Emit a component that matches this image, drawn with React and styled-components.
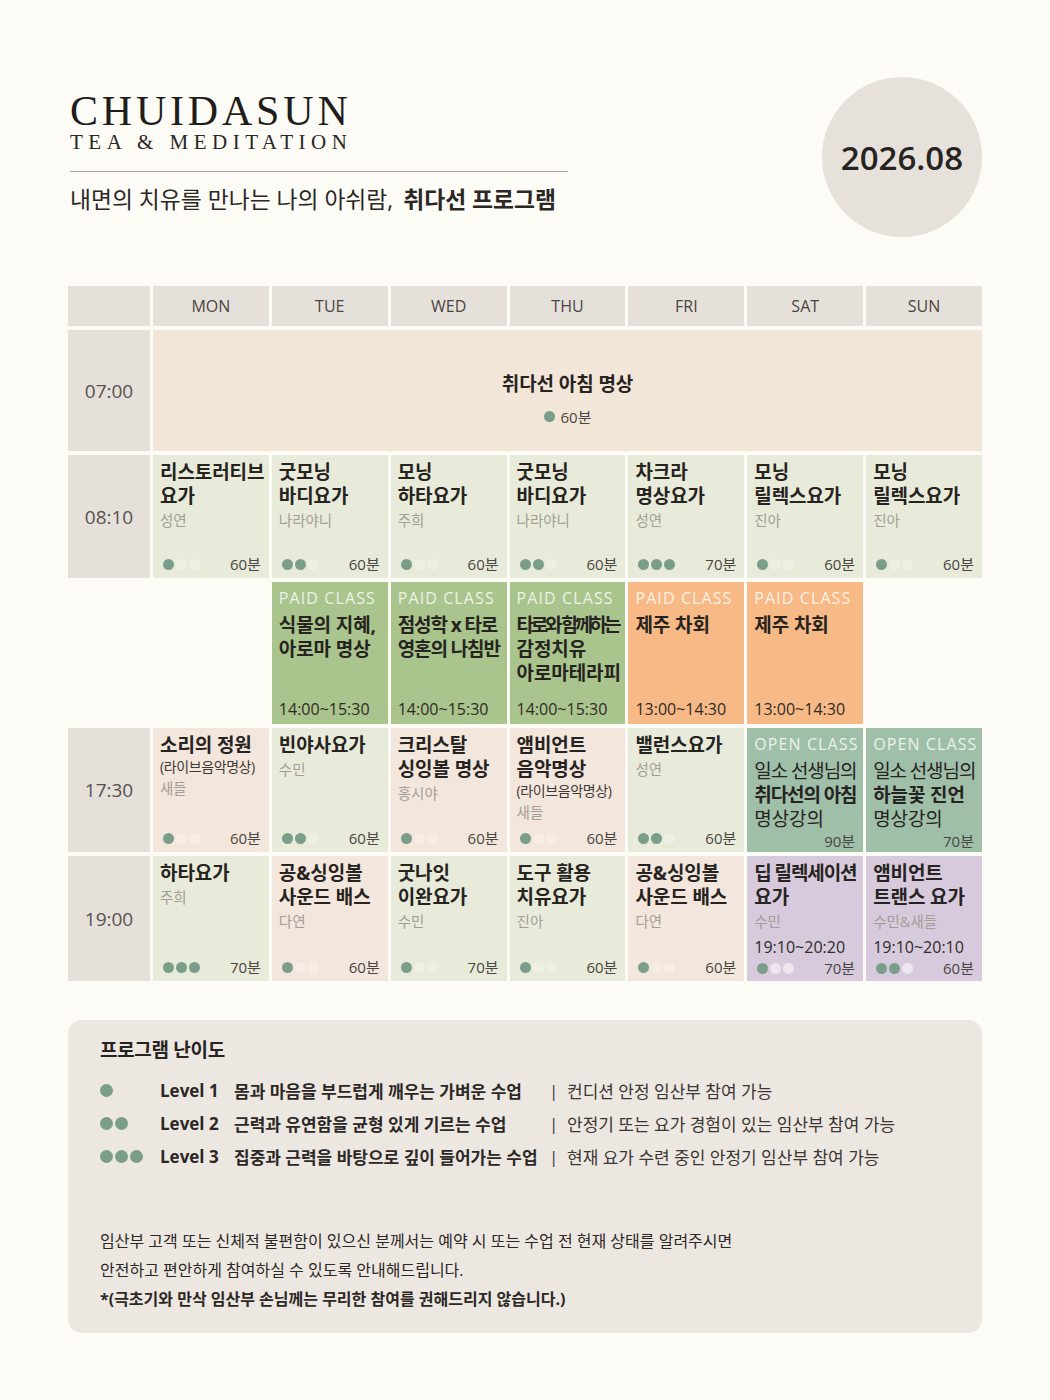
import React from 'react'
import styled, { createGlobalStyle } from 'styled-components'

const GlobalStyle = createGlobalStyle`
  body {
    margin: 0;
    background: #fcfbf5;
    font-family: 'Open Sans', 'Noto Sans CJK KR', sans-serif;
    color: #262320;
  }
`

const tones = {
  head: { bg: '#e6e0da' },
  morning: { bg: '#f2e6d9' },
  green: { bg: '#e8ebda', faint: 'rgba(255,255,255,0.28)' },
  peach: { bg: '#f3e6dc', faint: 'rgba(255,255,255,0.28)' },
  paid: { bg: '#a9c48c' },
  orange: { bg: '#f7b985' },
  teal: { bg: '#9fbfa9' },
  purple: { bg: '#d6cadc', faint: '#eee6ef' },
}

const days = ['MON', 'TUE', 'WED', 'THU', 'FRI', 'SAT', 'SUN']

const rows = [
  {
    time: '08:10',
    cells: [
      { tone: 'green', title: ['리스토러티브', '요가'], teacher: '성연', level: 1, dur: '60분' },
      { tone: 'green', title: ['굿모닝', '바디요가'], teacher: '나라야니', level: 2, dur: '60분' },
      { tone: 'green', title: ['모닝', '하타요가'], teacher: '주희', level: 1, dur: '60분' },
      { tone: 'green', title: ['굿모닝', '바디요가'], teacher: '나라야니', level: 2, dur: '60분' },
      { tone: 'green', title: ['차크라', '명상요가'], teacher: '성연', level: 3, dur: '70분' },
      { tone: 'green', title: ['모닝', '릴렉스요가'], teacher: '진아', level: 1, dur: '60분' },
      { tone: 'green', title: ['모닝', '릴렉스요가'], teacher: '진아', level: 1, dur: '60분' },
    ],
  },
  {
    time: null,
    cells: [
      null,
      { tone: 'paid', label: 'PAID CLASS', title: ['식물의 지혜,', '아로마 명상'], slot: '14:00~15:30' },
      { tone: 'paid', label: 'PAID CLASS', title: [{ t: '점성학 x 타로', fit: true }, { t: '영혼의 나침반', fit: true }], slot: '14:00~15:30' },
      { tone: 'paid', label: 'PAID CLASS', title: [{ t: '타로와 함께하는', tight: true }, '감정치유', '아로마테라피'], slot: '14:00~15:30' },
      { tone: 'orange', label: 'PAID CLASS', title: ['제주 차회'], slot: '13:00~14:30' },
      { tone: 'orange', label: 'PAID CLASS', title: ['제주 차회'], slot: '13:00~14:30' },
      null,
    ],
  },
  {
    time: '17:30',
    cells: [
      { tone: 'peach', title: ['소리의 정원'], sub: '(라이브음악명상)', teacher: '새들', level: 1, dur: '60분' },
      { tone: 'green', title: ['빈야사요가'], teacher: '수민', level: 2, dur: '60분' },
      { tone: 'peach', title: ['크리스탈', '싱잉볼 명상'], teacher: '홍시야', level: 1, dur: '60분' },
      { tone: 'peach', title: ['앰비언트', '음악명상'], sub: '(라이브음악명상)', teacher: '새들', level: 1, dur: '60분' },
      { tone: 'green', title: ['밸런스요가'], teacher: '성연', level: 2, dur: '60분' },
      { tone: 'teal', label: 'OPEN CLASS', title: [{ t: '일소 선생님의', light: true, fit: true }, { t: '취다선의 아침', fit: true }, { t: '명상강의', light: true }], dur: '90분' },
      { tone: 'teal', label: 'OPEN CLASS', title: [{ t: '일소 선생님의', light: true, fit: true }, '하늘꽃 진언', { t: '명상강의', light: true }], dur: '70분' },
    ],
  },
  {
    time: '19:00',
    cells: [
      { tone: 'green', title: ['하타요가'], teacher: '주희', level: 3, dur: '70분' },
      { tone: 'peach', title: ['공&싱잉볼', '사운드 배스'], teacher: '다연', level: 1, dur: '60분' },
      { tone: 'green', title: ['굿나잇', '이완요가'], teacher: '수민', level: 1, dur: '70분' },
      { tone: 'green', title: ['도구 활용', '치유요가'], teacher: '진아', level: 1, dur: '60분' },
      { tone: 'peach', title: ['공&싱잉볼', '사운드 배스'], teacher: '다연', level: 1, dur: '60분' },
      { tone: 'purple', title: [{ t: '딥 릴렉세이션', fit: true }, '요가'], teacher: '수민', slot: '19:10~20:20', level: 1, dur: '70분' },
      { tone: 'purple', title: ['앰비언트', '트랜스 요가'], teacher: '수민&새들', slot: '19:10~20:10', level: 2, dur: '60분' },
    ],
  },
]

const levels = [
  { n: 1, name: 'Level 1', desc: '몸과 마음을 부드럽게 깨우는 가벼운 수업', note: '컨디션 안정 임산부 참여 가능' },
  { n: 2, name: 'Level 2', desc: '근력과 유연함을 균형 있게 기르는 수업', note: '안정기 또는 요가 경험이 있는 임산부 참여 가능' },
  { n: 3, name: 'Level 3', desc: '집중과 근력을 바탕으로 깊이 들어가는 수업', note: '현재 요가 수련 중인 안정기 임산부 참여 가능' },
]

const LevelDots = ({ level, faint, size }) => (
  <Dots>
    {[1, 2, 3].map((i) =>
      i <= level || faint ? (
        <Dot key={i} $on={i <= level} $faint={faint} $size={size} />
      ) : null
    )}
  </Dots>
)

const ClassCell = ({ cell }) => {
  const tone = tones[cell.tone]
  return (
    <Cell $bg={tone.bg}>
      {cell.label && <Label>{cell.label}</Label>}
      <Title $spaced={!!cell.label}>
        {cell.title.map((line, i) => {
          const l = typeof line === 'string' ? { t: line } : line
          return (
            <Line key={i} $light={l.light} $tight={l.tight} $fit={l.fit}>
              {l.t}
            </Line>
          )
        })}
      </Title>
      {cell.sub && <Sub>{cell.sub}</Sub>}
      {cell.teacher && <Teacher>{cell.teacher}</Teacher>}
      {cell.slot && <Slot $end={!cell.dur}>{cell.slot}</Slot>}
      {cell.dur && (
        <Footer>
          {cell.level ? <LevelDots level={cell.level} faint={tone.faint} size={11} /> : <span />}
          <Duration>{cell.dur}</Duration>
        </Footer>
      )}
    </Cell>
  )
}

const App = () => {
  return (
    <>
      <GlobalStyle />
      <Page>
        <Header>
          <Brand>
            <Wordmark>CHUIDASUN</Wordmark>
            <Tagline>TEA &amp; MEDITATION</Tagline>
            <Rule />
            <Subtitle>
              내면의 치유를 만나는 나의 아쉬람,<strong>취다선 프로그램</strong>
            </Subtitle>
          </Brand>
          <DateBadge>2026.08</DateBadge>
        </Header>

        <Schedule>
          <HeadCell />
          {days.map((d) => (
            <HeadCell key={d}>{d}</HeadCell>
          ))}

          <TimeCell>07:00</TimeCell>
          <MorningCell>
            <Line>취다선 아침 명상</Line>
            <MorningMeta>
              <Dot $on $size={11} />
              <Duration>60분</Duration>
            </MorningMeta>
          </MorningCell>

          {rows.map((row, r) => (
            <React.Fragment key={r}>
              {row.time ? <TimeCell>{row.time}</TimeCell> : <Blank />}
              {row.cells.map((cell, c) =>
                cell ? <ClassCell key={c} cell={cell} /> : <Blank key={c} />
              )}
            </React.Fragment>
          ))}
        </Schedule>

        <Legend>
          <LegendTitle>프로그램 난이도</LegendTitle>
          <LevelTable>
            {levels.map((lv) => (
              <LevelRow key={lv.n}>
                <LevelDots level={lv.n} size={13} />
                <LevelName>{lv.name}</LevelName>
                <LevelDesc>{lv.desc}</LevelDesc>
                <Bar>|</Bar>
                <LevelNote>{lv.note}</LevelNote>
              </LevelRow>
            ))}
          </LevelTable>
          <Notes>
            <Note>임산부 고객 또는 신체적 불편함이 있으신 분께서는 예약 시 또는 수업 전 현재 상태를 알려주시면</Note>
            <Note>안전하고 편안하게 참여하실 수 있도록 안내해드립니다.</Note>
            <Note $bold>*(극초기와 만삭 임산부 손님께는 무리한 참여를 권해드리지 않습니다.)</Note>
          </Notes>
        </Legend>
      </Page>
    </>
  )
}

const Page = styled.div`
  width: 1050px;
  min-height: 1400px;
  box-sizing: border-box;
  padding: 0 68px;
`

const Header = styled.header`
  display: flex;
  justify-content: space-between;
  align-items: flex-start;
  padding-top: 77px;
`

const Brand = styled.div`
  margin-top: 13px;
  padding-left: 2px;
  width: 498px;
`

const Wordmark = styled.div`
  font-family: 'Liberation Serif', serif;
  font-size: 42px;
  line-height: 42px;
  letter-spacing: 3.8px;
  color: #1f1d1b;
`

const Tagline = styled.div`
  font-family: 'Liberation Serif', serif;
  font-size: 21px;
  line-height: 20px;
  letter-spacing: 5.5px;
  color: #2a2725;
`

const Rule = styled.div`
  margin-top: 19px;
  height: 1px;
  background: #aca8a1;
`

const Subtitle = styled.div`
  margin-top: 13px;
  font-size: 22.8px;
  line-height: 30px;
  color: #2a2725;
  white-space: nowrap;
  strong {
    font-weight: 700;
    margin-left: 10px;
  }
`

const DateBadge = styled.div`
  width: 160px;
  height: 160px;
  border-radius: 50%;
  background: #e7e1dc;
  display: flex;
  align-items: center;
  justify-content: center;
  font-size: 33px;
  font-weight: 600;
  color: #262320;
`

const Schedule = styled.div`
  margin-top: 49px;
  display: grid;
  grid-template-columns: 82px repeat(7, 1fr);
  grid-template-rows: 40px 121px 123px 142px 124px 125px;
  column-gap: 3px;
  row-gap: 4px;
`

const HeadCell = styled.div`
  background: #e6e0da;
  display: flex;
  align-items: center;
  justify-content: center;
  font-size: 16px;
  font-weight: 500;
  color: #4a4542;
`

const TimeCell = styled(HeadCell)`
  font-size: 19px;
  color: #57514e;
`

const Blank = styled.div``

const Cell = styled.div`
  background: ${(p) => p.$bg};
  display: flex;
  flex-direction: column;
  padding: 5px 6px 4px 7px;
  min-width: 0;
`

const MorningCell = styled(Cell)`
  grid-column: 2 / span 7;
  background: #f2e6d9;
  align-items: center;
  justify-content: center;
  padding: 18px 0 0;
`

const MorningMeta = styled.div`
  display: flex;
  align-items: center;
  gap: 6px;
  margin-top: 10px;
`

const Label = styled.div`
  font-size: 16px;
  line-height: 22px;
  letter-spacing: 1.1px;
  color: rgba(255, 255, 255, 0.82);
  white-space: nowrap;
`

const Title = styled.div`
  margin-top: ${(p) => (p.$spaced ? '4px' : '0')};
`

const Line = styled.div`
  font-size: 19px;
  line-height: 24px;
  font-weight: ${(p) => (p.$light ? 400 : 700)};
  letter-spacing: ${(p) => (p.$tight ? '-3.2px' : p.$fit ? '-1.1px' : '-0.1px')};
  color: #262320;
  white-space: nowrap;
`

const Sub = styled.div`
  font-size: 14px;
  line-height: 19px;
  letter-spacing: -0.4px;
  color: #3d3935;
  white-space: nowrap;
`

const Teacher = styled.div`
  margin-top: 3px;
  font-size: 14.5px;
  line-height: 20px;
  color: #a39d98;
  white-space: nowrap;
`

const Slot = styled.div`
  margin-top: ${(p) => (p.$end ? 'auto' : '4px')};
  font-size: 16px;
  line-height: 22px;
  color: #2f2b28;
  white-space: nowrap;
`

const Footer = styled.div`
  margin-top: auto;
  display: flex;
  align-items: center;
  justify-content: space-between;
  padding: 0 2px 0 3px;
  line-height: 20px;
`

const Dots = styled.div`
  display: flex;
  align-items: center;
  gap: 2px;
`

const Dot = styled.span`
  display: inline-block;
  width: ${(p) => p.$size}px;
  height: ${(p) => p.$size}px;
  border-radius: 50%;
  background: ${(p) => (p.$on ? '#7b9e8b' : p.$faint)};
`

const Duration = styled.span`
  font-size: 15px;
  color: #4a4643;
  white-space: nowrap;
`

const Legend = styled.section`
  margin-top: 39px;
  background: #ede7e1;
  border-radius: 14px;
  padding: 17px 32px 19px;
`

const LegendTitle = styled.div`
  font-size: 19px;
  line-height: 26px;
  font-weight: 700;
  letter-spacing: -0.3px;
`

const LevelTable = styled.div`
  margin-top: 11px;
  display: flex;
  flex-direction: column;
`

const LevelRow = styled.div`
  display: grid;
  grid-template-columns: 60px 74px 315px 18px 1fr;
  align-items: center;
  height: 33px;
  font-size: 17px;
  color: #2b2826;
`

const LevelName = styled.span`
  font-weight: 700;
`

const LevelDesc = styled.span`
  font-weight: 700;
  white-space: nowrap;
`

const Bar = styled.span`
  color: #3a3633;
`

const LevelNote = styled.span`
  color: #3a3633;
  white-space: nowrap;
`

const Notes = styled.div`
  margin-top: 54px;
`

const Note = styled.div`
  font-size: 16px;
  line-height: 29px;
  font-weight: ${(p) => (p.$bold ? 700 : 400)};
  color: #2b2826;
  white-space: nowrap;
`

export default App
